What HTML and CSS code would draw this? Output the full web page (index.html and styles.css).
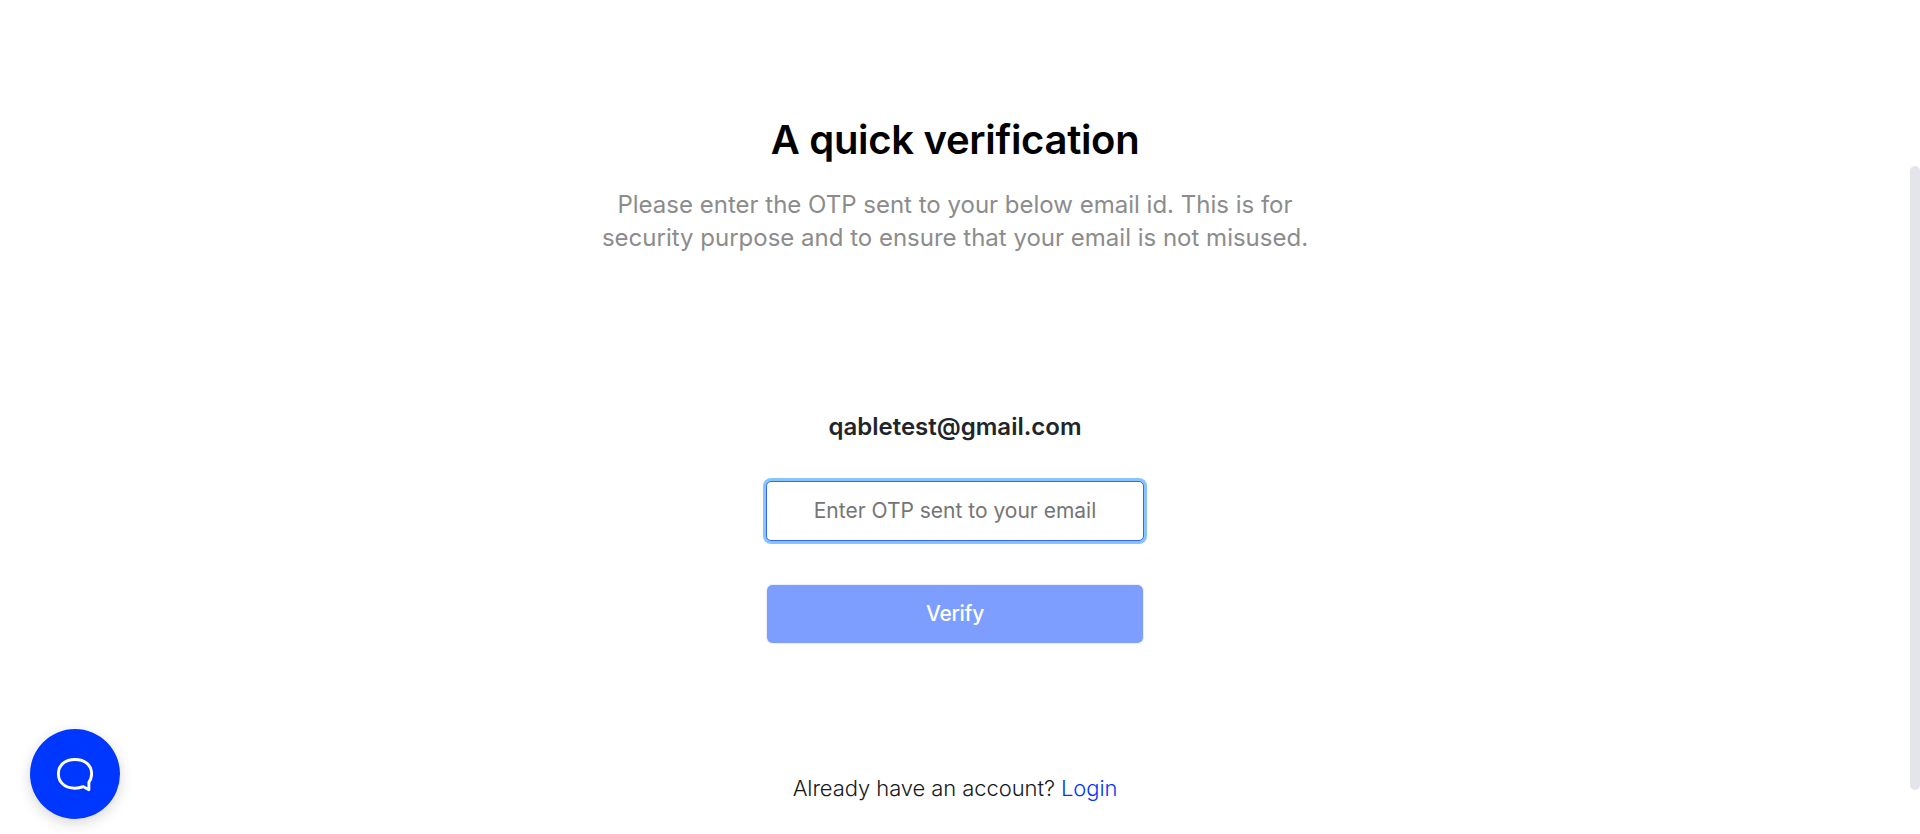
FILE: index.html
```html
<!DOCTYPE html>
<html lang="en">
<head>
<meta charset="utf-8">
<title>Verification</title>
<link rel="stylesheet" href="styles.css">
</head>
<body>
<main class="page">
<h1 class="title">A quick verification</h1>
<p class="intro">Please enter the OTP sent to your below email id. This is for<br>security purpose and to ensure that your email is not misused.</p>
<p class="email">qabletest@gmail.com</p>
<input class="otp" type="text" placeholder="Enter OTP sent to your email">
<button class="verify" type="button">Verify</button>
<p class="account">Already have an account? <a class="login" href="#">Login</a></p>
</main>
<div class="scrollbar"></div>
<button class="chat" type="button" aria-label="Chat">
<svg class="chat-icon" viewBox="0 0 36 34" fill="none" stroke="#fff" stroke-width="2.9" stroke-linejoin="round"><path d="M26 28.6C23.5 29.8 21 30.2 18 30.2C8 30.2 1.4 24.5 1.4 15.8C1.4 7.2 8 1.5 18 1.5C28 1.5 34.6 7.2 34.6 15.8C34.6 19.2 33.7 22 31.9 24.2L31.9 31.8Z"/></svg>
</button>
</body>
</html>
```
FILE: styles.css
```css
*{box-sizing:border-box}
body{margin:0;background:#fff;font-family:Inter,sans-serif;height:834px;overflow:hidden}
.page{width:1910px;display:flex;flex-direction:column;align-items:center;padding-top:115px}
.title{margin:0;font-size:40px;line-height:50px;font-weight:600;letter-spacing:-.3px;color:#000}
.intro{margin:23px 0 0;font-size:24px;line-height:33px;color:#8c8c8c;text-align:center}
.email{margin:157px 0 0;font-size:24px;line-height:32px;font-weight:600;color:#212529}
.otp{margin:38px 0 0;width:378px;height:60px;border:1px solid #3366ff;border-radius:5px;outline:0;box-shadow:0 0 0 3px #86c3ff;text-align:center;font:400 21px/30px Inter,sans-serif;padding:0 0 2px}
.otp::placeholder{color:#757575;opacity:1}
.verify{margin:43px 0 0;width:378px;height:60px;border:1px solid #eceef4;border-radius:6px;background:#7d9eff;background-clip:padding-box;color:#fff;font:500 21px/30px Inter,sans-serif;letter-spacing:-.3px;padding:0}
.account{margin:128px 0 0;font-size:22px;line-height:33px;font-weight:300;letter-spacing:-.08px;color:#16191c}
.login{color:#0037ff;text-decoration:none}
.scrollbar{position:absolute;right:0;top:166px;width:10px;height:624px;border-radius:5px;background:#e4e5ea}
.chat{position:absolute;left:30px;top:729px;width:90px;height:90px;border:0;border-radius:50%;background:#0037ff;padding:2px 0 0;display:flex;align-items:center;justify-content:center;box-shadow:0 4px 14px rgba(0,0,0,.16)}
.chat-icon{width:36px;height:34px}
```
